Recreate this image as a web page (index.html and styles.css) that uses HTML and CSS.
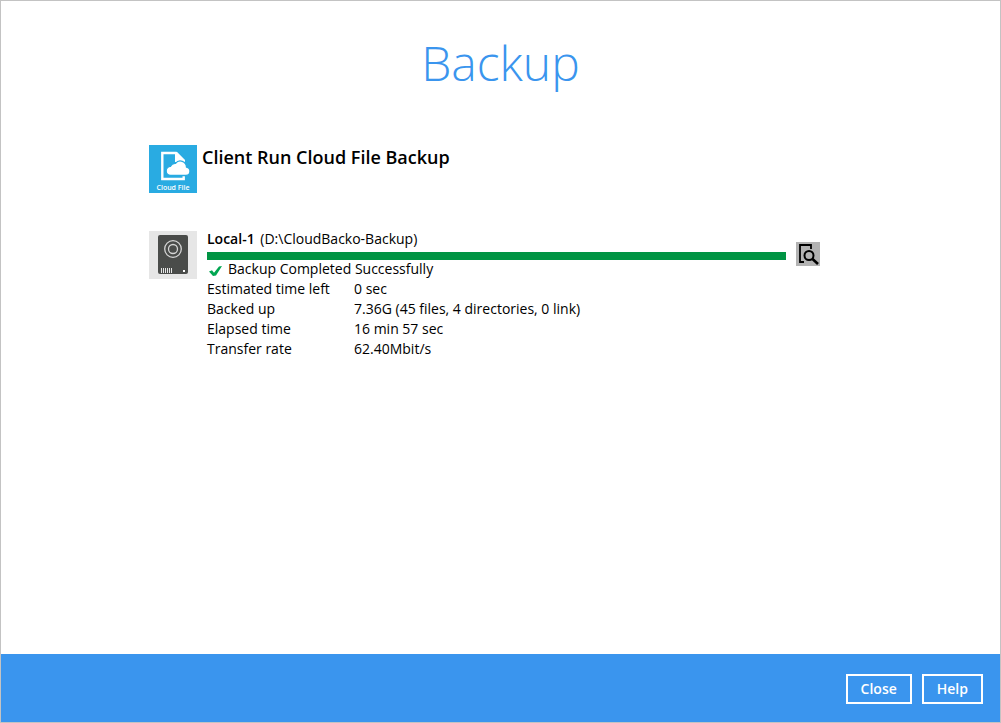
FILE: index.html
```
<!DOCTYPE html>
<html lang="en">
	<head>
		<meta charset="utf-8">
		<title>Backup</title>
		<link rel="stylesheet" href="styles.css">
	</head>
	<body>
		<div class="window">
			<h1 class="title">Backup</h1>
			<main class="content">
				<div class="backup-set">
					<svg class="icon" viewBox="0 0 48 48">
						<rect width="48" height="48" fill="#29abe2"/>
						<path d="M34.700 30v4H13.300V8H27l7.700 8v3" fill="none" stroke="#fff" stroke-width="2.400"/>
						<path d="M26 7h2l8 8v2H26z" fill="#fff"/>
						<path d="M22 30.500a4.600 4.600 0 0 1-.5-9.200a5 5 0 0 1 5-3a6.200 6.200 0 0 1 11 3.700a4.300 4.300 0 0 1-.5 8.500z" fill="#fff" stroke="#29abe2" stroke-width="1.300"/>
						<text class="icon-label" x="24" y="45" text-anchor="middle">Cloud File</text>
					</svg>
					<h2 class="set-name">Client Run Cloud File Backup</h2>
				</div>
				<div class="destination">
					<svg class="icon" viewBox="0 0 48 48">
						<rect width="48" height="48" fill="#e6e6e6"/>
						<rect x="9" y="4" width="30" height="39" rx="2" fill="#4a4c4a"/>
						<circle cx="24" cy="18" r="8.300" fill="none" stroke="#d5d5d5" stroke-width="1.300"/>
						<circle cx="24" cy="18" r="4.500" fill="none" stroke="#d5d5d5" stroke-width="1.300"/>
						<path d="M12.500 37v5M14.500 37v5M16.500 37v5M18.500 37v5M20.500 37v5M22.500 37v5" stroke="#e6e6e6"/>
						<rect x="34" y="39" width="2" height="2" fill="#fff"/>
					</svg>
					<div class="detail">
						<p class="path"><label for="progress"><b>Local-1</b> (D:\CloudBacko-Backup)</label></p>
						<progress class="bar" id="progress" max="100" value="100"></progress>
						<p class="status">
							<svg class="tick" viewBox="0 0 13 12">
								<path d="M0 6.500l3-1.200l2 2.500L10 1.500L13 1L7 10.500L4 11z" fill="#00a651"/>
							</svg>
							Backup Completed Successfully
						</p>
						<table class="stats">
							<tr><th scope="row">Estimated time left</th><td>0 sec</td></tr>
							<tr><th scope="row">Backed up</th><td>7.36G (45 files, 4 directories, 0 link)</td></tr>
							<tr><th scope="row">Elapsed time</th><td>16 min 57 sec</td></tr>
							<tr><th scope="row">Transfer rate</th><td>62.40Mbit/s</td></tr>
						</table>
					</div>
					<button class="view-log" type="button" aria-label="View log">
						<svg viewBox="0 0 24 24">
							<path d="M8 20H4V3h11v4" fill="none" stroke="#000" stroke-width="1.800"/>
							<circle cx="13" cy="13.500" r="4.500" fill="#b3b3b3" stroke="#000" stroke-width="2"/>
							<path d="M16.500 17l5.500 5" stroke="#000" stroke-width="2.600"/>
						</svg>
					</button>
				</div>
			</main>
			<footer class="footer">
				<button class="btn" type="button">Close</button>
				<button class="btn" type="button">Help</button>
			</footer>
		</div>
	</body>
</html>
```
FILE: styles.css
```
*{
	margin: 0;
	padding: 0;
	box-sizing: border-box;
}
body{
	font-family: "Open Sans", sans-serif;
	font-size: 14px;
	line-height: 20px;
	color: #000;
	background-color: #fff;
}
.window{
	display: flex;
	flex-direction: column;
	min-height: 100vh;
	border: 1px solid #c3c3c3;
}
.title{
	padding-top: 30px;
	font-size: 48px;
	line-height: 64px;
	font-weight: 300;
	text-align: center;
	color: #3a95ee;
}
.content{
	flex: 1;
	padding: 50px 180px 48px 148px;
}
.icon{
	display: block;
	flex: none;
	width: 48px;
	height: 48px;
}
.icon-label{
	font-size: 7px;
	font-weight: 600;
	fill: #fff;
}
.backup-set{
	display: flex;
	gap: 5px;
}
.set-name{
	font-size: 18px;
	line-height: 24px;
	font-weight: 600;
}
.destination{
	display: flex;
	gap: 10px;
	margin-top: 38px;
}
.detail{
	flex: 1;
	margin-top: -2px;
}
.path b{
	margin-right: 2px;
	font-weight: 600;
}
.bar{
	display: block;
	width: 100%;
	height: 8px;
	margin: 3px 0 -1px;
	border: none;
	appearance: none;
	background-color: #ddd;
}
.bar::-webkit-progress-bar{
	background-color: #ddd;
}
.bar::-webkit-progress-value{
	background-color: #009444;
}
.status{
	display: flex;
	align-items: center;
	gap: 6px;
	padding-left: 2px;
}
.tick{
	width: 13px;
	height: 12px;
	margin-top: 4px;
}
.stats{
	border-collapse: collapse;
}
.stats th{
	width: 147px;
	font-weight: 400;
	text-align: left;
}
.view-log{
	flex: none;
	width: 24px;
	height: 24px;
	margin-top: 11px;
	border: none;
	background-color: #b3b3b3;
	cursor: pointer;
}
.view-log svg{
	display: block;
}
.footer{
	display: flex;
	justify-content: flex-end;
	gap: 10px;
	padding: 20px 17px 18px;
	background-color: #3a95ee;
}
.btn{
	height: 30px;
	padding: 0 13px 2px;
	border: 2px solid #fff;
	font-family: inherit;
	font-size: 14px;
	font-weight: 600;
	color: #fff;
	background-color: transparent;
	cursor: pointer;
}
```
